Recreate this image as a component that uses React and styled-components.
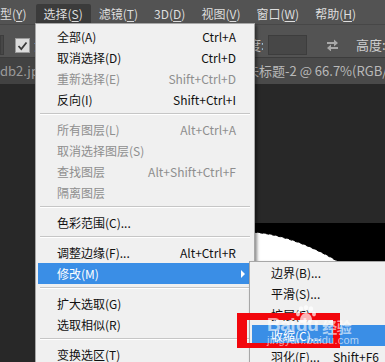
import React from 'react'
import styled, {createGlobalStyle} from 'styled-components'

const GlobalStyle = createGlobalStyle`
  html, body {
    margin: 0;
    padding: 0;
    background: #282828;
  }
  body {
    font-family: "Noto Sans CJK SC", "Noto Sans", sans-serif;
  }
`

const Screen = styled.div`
  position: relative;
  width: 385px;
  height: 362px;
  overflow: hidden;
  background: #282828;
  display: flex;
  flex-direction: column;
  font-size: 12px;
`

const MenuBar = styled.div`
  height: 24px;
  flex-shrink: 0;
  background: #535353;
  display: flex;
  align-items: flex-end;
  color: #dedede;
  white-space: nowrap;
`

const MenuTitle = styled.div`
  height: 20px;
  line-height: 20px;
  padding: ${p => (p.$first ? '0 9px 0 0' : '0 8px')};
  border-radius: 2px 2px 0 0;
  background: ${p => (p.$open ? '#3b3b3b' : 'transparent')};
  u {
    text-decoration-thickness: 1px;
    text-underline-offset: 2px;
  }
`

const OptionsBar = styled.div`
  height: 34px;
  flex-shrink: 0;
  box-sizing: border-box;
  background: #535353;
  border-top: 1px solid #474747;
  border-bottom: 1px solid #3c3c3c;
  display: flex;
  align-items: flex-start;
  padding-top: 10px;
  color: #cfcfcf;
  font-size: 13px;
  white-space: nowrap;
`

const Field = styled.div`
  width: ${p => p.$w}px;
  height: 20px;
  flex-shrink: 0;
  box-sizing: border-box;
  background: #474747;
  border: 1px solid #3d3d3d;
  margin-left: ${p => p.$gap || 0}px;
`

const Check = styled.div`
  width: 15px;
  height: 15px;
  flex-shrink: 0;
  margin: 3px 0 0 ${p => p.$gap}px;
  box-sizing: border-box;
  border: 1px solid #9a9a9a;
  background: #dcdcdc;
  display: flex;
  align-items: center;
  justify-content: center;
`

const OptLabel = styled.span`
  width: ${p => p.$w}px;
  flex-shrink: 0;
  overflow: hidden;
  line-height: 20px;
  margin-left: ${p => p.$gap}px;
`

const SwapIcon = styled.svg`
  flex-shrink: 0;
  margin: 4px 0 0 ${p => p.$gap}px;
`

const TabBar = styled.div`
  height: 26px;
  flex-shrink: 0;
  background: #424242;
  display: flex;
  font-size: 13px;
  white-space: nowrap;
`

const Tab = styled.div`
  width: ${p => p.$w}px;
  flex-shrink: 0;
  line-height: 26px;
  padding-left: ${p => p.$pad}px;
  background: ${p => (p.$active ? '#4a4a4a' : 'transparent')};
  color: ${p => (p.$active ? '#b9b9b9' : '#9a9a9a')};
  overflow: hidden;
`

const Workspace = styled.div`
  flex: 1;
  display: flex;
  padding: 139px 0 0 200px;
  background: #282828;
`

const Doc = styled.div`
  flex: 1;
  background: #000;
`

const Dropdown = styled.div`
  position: absolute;
  left: 35px;
  top: 23px;
  width: 220px;
  height: 350px;
  box-sizing: border-box;
  padding-top: 2px;
  background: #f0f0f0;
  border: 1px solid #a7a7a7;
  box-shadow: 2px 2px 3px rgba(0, 0, 0, 0.45);
`

const Item = styled.div`
  height: 21px;
  display: flex;
  align-items: center;
  justify-content: space-between;
  margin: ${p => p.$margin || '0 4px 0 2px'};
  padding: 0 ${p => p.$padRight || 14}px 0 19px;
  white-space: nowrap;
  background: ${p => (p.$active ? '#3a8ee6' : 'transparent')};
  color: ${p => (p.$active ? '#fff' : p.$disabled ? '#8e8e8e' : '#111')};
`

const Separator = styled.div`
  height: 1px;
  margin: 3px 4px 4px;
  background: #c6c6c6;
  border-bottom: 1px solid #fff;
`

const Arrow = styled.span`
  width: 0;
  height: 0;
  margin-right: -9px;
  border-left: 4px solid #fff;
  border-top: 4px solid transparent;
  border-bottom: 4px solid transparent;
`

const Submenu = styled.div`
  position: absolute;
  left: 249px;
  top: 261px;
  width: 145px;
  height: 110px;
  background: #f0f0f0;
  border: 1px solid #a7a7a7;
  box-shadow: 2px 2px 3px rgba(0, 0, 0, 0.45);
`

const Callout = styled.div`
  position: absolute;
  left: 237px;
  top: 313px;
  width: 103px;
  height: 35px;
  box-sizing: border-box;
  border: 7px solid #f2060c;
  border-left-width: 10px;
  border-bottom-width: 5px;
`

const Watermark = styled.div`
  position: absolute;
  left: 267px;
  top: 305px;
  color: rgba(255, 255, 255, 0.62);
  font-family: "Liberation Sans", Arial, sans-serif;
  pointer-events: none;
`

const MarkRow = styled.div`
  display: flex;
  align-items: flex-end;
  line-height: 1;
`

const MarkBig = styled.span`
  font-size: ${p => p.$size}px;
  font-weight: bold;
  font-family: ${p => (p.$cjk ? '"Noto Sans CJK SC", sans-serif' : 'inherit')};
  margin-left: ${p => p.$gap || 0}px;
  letter-spacing: -0.5px;
`

const PawMark = styled.svg`
  margin: 0 -21px 9px 0;
  flex-shrink: 0;
`

const MarkSmall = styled.div`
  font-size: 11px;
  line-height: 11px;
  margin-top: 1px;
  letter-spacing: 0.2px;
`

const mainItems = [
  {label: '全部(A)', key: 'Ctrl+A'},
  {label: '取消选择(D)', key: 'Ctrl+D'},
  {label: '重新选择(E)', key: 'Shift+Ctrl+D', disabled: true},
  {label: '反向(I)', key: 'Shift+Ctrl+I'},
  'sep',
  {label: '所有图层(L)', key: 'Alt+Ctrl+A', disabled: true},
  {label: '取消选择图层(S)', disabled: true},
  {label: '查找图层', key: 'Alt+Shift+Ctrl+F', disabled: true},
  {label: '隔离图层', disabled: true},
  'sep',
  {label: '色彩范围(C)...'},
  'sep',
  {label: '调整边缘(F)...', key: 'Alt+Ctrl+R'},
  {label: '修改(M)', active: true, sub: true},
  'sep',
  {label: '扩大选取(G)'},
  {label: '选取相似(R)'},
  'sep',
  {label: '变换选区(T)'},
]

const subItems = [
  {label: '边界(B)...'},
  {label: '平滑(S)...'},
  {label: '扩展(E)...'},
  {label: '收缩(C)...', active: true},
  {label: '羽化(F)...', key: 'Shift+F6'},
]

const titles = [
  ['型(', 'Y', ')'],
  ['选择(', 'S', ')'],
  ['滤镜(', 'T', ')'],
  ['3D(', 'D', ')'],
  ['视图(', 'V', ')'],
  ['窗口(', 'W', ')'],
  ['帮助(', 'H', ')'],
]

export default function App() {
  return (
    <Screen>
      <GlobalStyle />
      <MenuBar>
        {titles.map((t, i) => (
          <MenuTitle key={t[0]} $first={i === 0} $open={i === 1}>
            {t[0]}<u>{t[1]}</u>{t[2]}
          </MenuTitle>
        ))}
      </MenuBar>

      <OptionsBar>
        <Field $w={4} />
        <Check $gap={11}>
          <svg width="11" height="10" viewBox="0 0 11 10">
            <path d="M1.5 5 L4.3 8 L9.5 1.5" fill="none" stroke="#3a3a3a" strokeWidth="1.8" />
          </svg>
        </Check>
        <OptLabel $gap={4} $w={170}>消除锯齿 样式: 正常</OptLabel>
        <OptLabel $gap={31} $w={28}>宽度:</OptLabel>
        <Field $w={39} $gap={5} />
        <SwapIcon $gap={20} width="11" height="12" viewBox="0 0 11 12">
          <g fill="#a9a9a9">
            <path d="M0 3 L7 3 L7 0.5 L11 4 L7 7.5 L7 5 L0 5 Z" />
            <path d="M11 8 L4 8 L4 5.5 L0 9 L4 12.5 L4 10 L11 10 Z" />
          </g>
        </SwapIcon>
        <OptLabel $gap={18} $w={40}>高度:</OptLabel>
      </OptionsBar>

      <TabBar>
        <Tab $w={244} $pad={0}>db2.jpg @ 100%(RGB/8)</Tab>
        <Tab $w={200} $pad={2} $active>未标题-2 @ 66.7%(RGB/...</Tab>
      </TabBar>

      <Workspace>
        <Doc>
          <svg width="200" height="140" viewBox="0 0 200 140">
            <path
              d="M0 8 C30 7 55 8 73 12 C95 17 115 25 137 38 L170 70 L170 140 L0 140 Z"
              fill="#fff"
            />
            <path
              d="M0 8 C30 7 55 8 73 12 C95 17 115 25 137 38 L170 70"
              fill="none"
              stroke="#000"
              strokeWidth="1"
              strokeDasharray="3 3"
            />
          </svg>
        </Doc>
      </Workspace>

      <Dropdown>
        {mainItems.map((it, i) =>
          it === 'sep' ? (
            <Separator key={i} />
          ) : (
            <Item key={i} $disabled={it.disabled} $active={it.active}>
              <span>{it.label}</span>
              {it.sub ? <Arrow /> : <span>{it.key}</span>}
            </Item>
          )
        )}
      </Dropdown>

      <Submenu>
        {subItems.map(it => (
          <Item key={it.label} $active={it.active} $margin="0 5px 0 2px" $padRight={11}>
            <span>{it.label}</span>
            <span>{it.key}</span>
          </Item>
        ))}
      </Submenu>

      <Callout />

      <Watermark>
        <MarkRow>
          <MarkBig $size={19}>Bai</MarkBig>
          <PawMark width="22" height="20" viewBox="0 0 22 20">
            <g fill="rgba(255,255,255,0.7)">
              <ellipse cx="6" cy="4" rx="2.2" ry="2.8" />
              <ellipse cx="11" cy="2.6" rx="2.2" ry="2.6" />
              <ellipse cx="16" cy="4" rx="2.2" ry="2.8" />
              <ellipse cx="3" cy="9" rx="2" ry="2.4" />
              <ellipse cx="19" cy="9" rx="2" ry="2.4" />
              <path d="M11 8 C7 8 5 12 5 15 C5 18 8 18 11 17 C14 18 17 18 17 15 C17 12 15 8 11 8 Z" />
            </g>
          </PawMark>
          <MarkBig $size={19}>du</MarkBig>
          <MarkBig $size={15} $cjk $gap={4}>经验</MarkBig>
        </MarkRow>
        <MarkSmall>jingyan.baidu.com</MarkSmall>
      </Watermark>
    </Screen>
  )
}
